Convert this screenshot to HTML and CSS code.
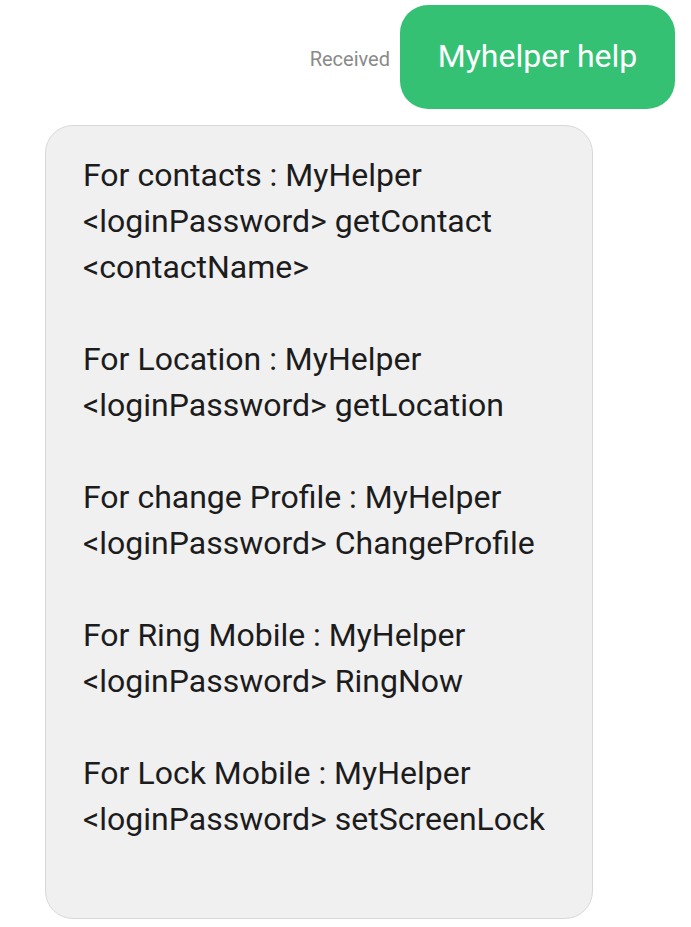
FILE: index.html
```html
<!DOCTYPE html>
<html>
<head>
<meta charset="utf-8">
<link rel="stylesheet" href="styles.css">
</head>
<body>
<div class="thread">
  <div class="row-sent">
    <span class="status">Received</span>
    <div class="bubble-sent">Myhelper help</div>
  </div>
  <div class="row-recv">
    <div class="bubble-recv">
      <p class="para">For contacts : MyHelper<br>&lt;loginPassword&gt; getContact<br>&lt;contactName&gt;</p>
      <p class="para">For Location : MyHelper<br>&lt;loginPassword&gt; getLocation</p>
      <p class="para">For change Profile : MyHelper<br>&lt;loginPassword&gt; ChangeProfile</p>
      <p class="para">For Ring Mobile : MyHelper<br>&lt;loginPassword&gt; RingNow</p>
      <p class="para">For Lock Mobile : MyHelper<br>&lt;loginPassword&gt; setScreenLock</p>
    </div>
  </div>
</div>
</body>
</html>
```
FILE: styles.css
```css
html, body {
  margin: 0;
  padding: 0;
  background: #ffffff;
}
body {
  font-family: Roboto, "Noto Sans", sans-serif;
  width: 691px;
  height: 927px;
  overflow: hidden;
}
.thread {
  display: flex;
  flex-direction: column;
}
.row-sent {
  display: flex;
  justify-content: flex-end;
  align-items: center;
  gap: 10px;
  padding-right: 16px;
  margin-top: 5px;
}
.status {
  font-size: 20px;
  color: #8a8a8a;
  padding-top: 4px;
}
.bubble-sent {
  box-sizing: border-box;
  height: 104px;
  width: 275px;
  background: #35c174;
  color: #ffffff;
  border-radius: 28px;
  font-size: 32px;
  display: flex;
  align-items: center;
  justify-content: center;
  padding-bottom: 2px;
}
.row-recv {
  margin-top: 16px;
  padding-left: 45px;
}
.bubble-recv {
  box-sizing: border-box;
  width: 548px;
  height: 794px;
  background: #f0f0f0;
  border: 1px solid #d8d8d8;
  border-radius: 28px;
  padding: 26px 10px 0 37px;
  color: #1c1c1c;
  font-size: 32px;
  line-height: 46px;
  white-space: nowrap;
}
.para {
  margin: 0 0 46px 0;
}
```
